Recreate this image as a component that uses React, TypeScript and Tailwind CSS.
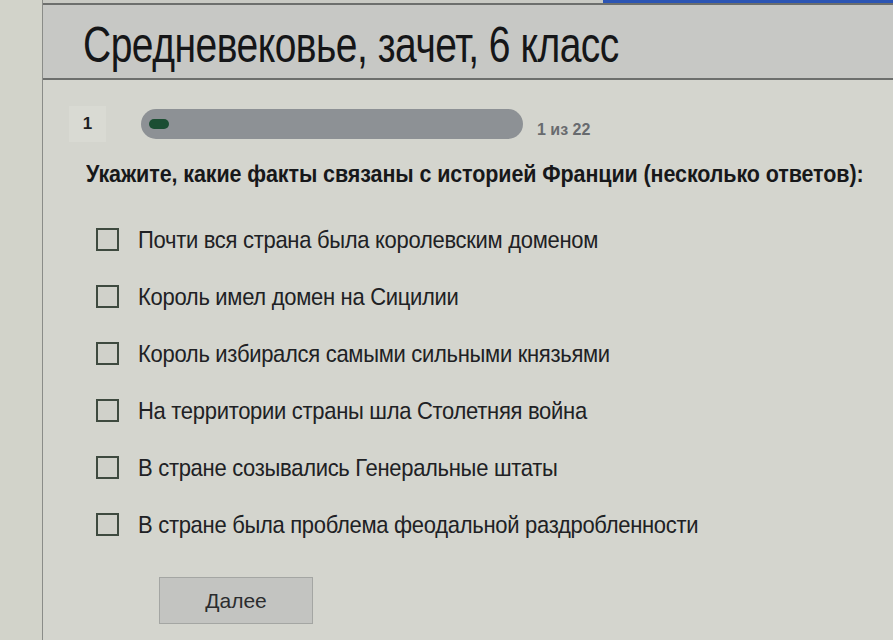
const OPTIONS = [
  'Почти вся страна была королевским доменом',
  'Король имел домен на Сицилии',
  'Король избирался самыми сильными князьями',
  'На территории страны шла Столетняя война',
  'В стране созывались Генеральные штаты',
  'В стране была проблема феодальной раздробленности',
];

export default function App() {
  return (
    <div className="w-[893px] h-[640px] overflow-hidden bg-[#cfd0c8] flex font-['Liberation_Sans',Arial,sans-serif] text-[#1c1d1f]">
      {/* left gutter */}
      <div className="w-[42px] shrink-0 bg-[#d2d3ca]" />

      <div className="flex-1 flex flex-col border-l border-[#8a8c88] bg-[#d4d5ce]">
        <div className="flex h-[3px]">
          <div className="flex-1 bg-[#c9cac4]" />
          <div className="w-[290px] bg-[#2c55b4]" />
        </div>

        {/* header */}
        <div className="h-[77px] border-t-2 border-b-2 border-[#6d6f6d] bg-[#c7c8c5] pl-[40px] pt-[5px] flex items-center">
          <h1 className="text-[39px] leading-none tracking-[-0.5px] text-[#151618] scale-y-[1.3] origin-left">Средневековье, зачет, 6 класс</h1>
        </div>

        <div className="pl-[26px] pt-[26px]">
          {/* progress */}
          <div className="flex items-center">
            <div className="w-[37px] h-[36px] bg-[#d9dad3] flex items-center justify-center text-[17px] font-bold">1</div>
            <div className="ml-[35px] w-[382px] h-[30px] rounded-full bg-[#8d9195] flex items-center pl-[8px]">
              <div className="w-[20px] h-[10px] rounded-full bg-[#1b4e33]" />
            </div>
            <div className="ml-[14px] mt-[12px] text-[16px] font-bold text-[#686b6e]">1 из 22</div>
          </div>

          {/* question */}
          <div className="mt-[16px] ml-[17px] text-[21.5px] font-bold tracking-[-0.1px] text-[#17181a] scale-y-[1.1] origin-left">
            Укажите, какие факты связаны с историей Франции (несколько ответов):
          </div>

          {/* answers */}
          <div className="mt-[38px] ml-[27px] flex flex-col gap-[34px]">
            {OPTIONS.map((text) => (
              <label key={text} className="flex items-center gap-[19px] h-[23px]">
                <span className="w-[23px] h-[23px] border-2 border-[#3e4a3f] bg-[#d0d1ca] shrink-0" />
                <span className="text-[22px] tracking-[-0.3px] text-[#202124] scale-y-[1.1] origin-left">{text}</span>
              </label>
            ))}
          </div>

          <button className="mt-[41px] ml-[90px] w-[154px] h-[47px] bg-[#c3c4c1] border border-[#a4a6a3] text-[21px] text-[#2b2c2e]">
            Далее
          </button>
        </div>
      </div>
    </div>
  );
}
